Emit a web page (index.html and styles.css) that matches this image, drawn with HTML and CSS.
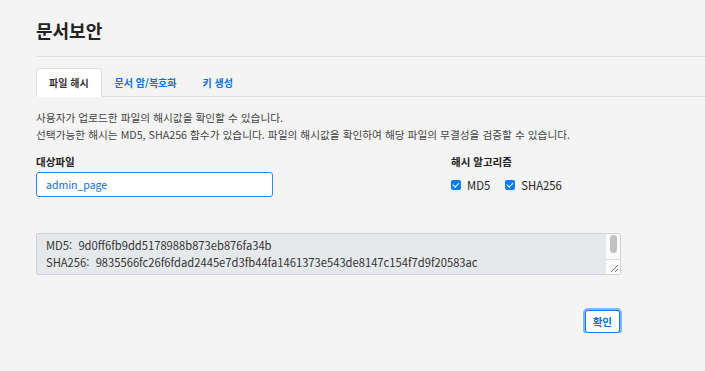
FILE: index.html
```html
<!DOCTYPE html>
<html lang="ko">
<head>
    <meta charset="UTF-8">
    <meta name="viewport" content="width=device-width, initial-scale=1.0">
    <title>문서보안</title>
    <link rel="stylesheet" href="styles.css">
</head>
<body>
    <div class="page">
        <div class="page-header">
            <h1>문서보안</h1>
        </div>

        <ul class="nav-tabs">
            <li class="tab-item"><a class="tab-link active" href="#">파일 해시</a></li>
            <li class="tab-item"><a class="tab-link" href="#">문서 암/복호화</a></li>
            <li class="tab-item"><a class="tab-link" href="#">키 생성</a></li>
        </ul>

        <form class="hash-form">
            <p class="desc">
                사용자가 업로드한 파일의 해시값을 확인할 수 있습니다.<br>
                선택가능한 해시는 MD5, SHA256 함수가 있습니다. 파일의 해시값을 확인하여 해당 파일의 무결성을 검증할 수 있습니다.
            </p>

            <div class="form-row">
                <div class="form-group">
                    <label class="form-label" for="targetFile">대상파일</label>
                    <div class="field">
                        <input type="text" id="targetFile" class="form-input" value="admin_page">
                    </div>
                </div>
                <div class="form-group">
                    <span class="form-label">해시 알고리즘</span>
                    <div class="field checks">
                        <label class="check"><input type="checkbox" checked> MD5</label>
                        <label class="check"><input type="checkbox" checked> SHA256</label>
                    </div>
                </div>
            </div>

            <div class="result-box">
                <textarea class="result" readonly>MD5:  9d0ff6fb9dd5178988b873eb876fa34b
SHA256:  9835566fc26f6fdad2445e7d3fb44fa1461373e543de8147c154f7d9f20583ac
</textarea>
                <!-- scrollbar + resize grip, drawn since headless hides native scrollbars -->
                <div class="scroll-bar">
                    <div class="scroll-thumb"></div>
                    <div class="resize-grip">
                        <svg width="9" height="9" viewBox="0 0 9 9">
                            <path d="M1 8 L8 1 M5 8 L8 5" stroke="#555" stroke-width="0.8" fill="none"/>
                        </svg>
                    </div>
                </div>
            </div>

            <div class="actions">
                <button type="submit" class="btn-confirm">확인</button>
            </div>
        </form>
    </div>
</body>
</html>
```

FILE: styles.css
```css
* {
    box-sizing: border-box;
}

body {
    margin: 0;
    background-color: #f4f4f4;
    color: #333;
    font-family: "Noto Sans CJK KR", "Noto Sans", sans-serif;
    font-size: 10px;
}

.page {
    padding: 18px 0 0 36px;
}

.page-header {
    padding-bottom: 14px;
    border-bottom: 1px solid #dcdfe3;
}

.page-header h1 {
    margin: 0;
    font-size: 18px;
    line-height: 24px;
    font-weight: 700;
    color: #222;
}

.nav-tabs {
    display: flex;
    list-style: none;
    margin: 11px 0 0;
    padding: 0;
    border-bottom: 1px solid #dcdfe3;
}

.tab-item {
    margin-bottom: -1px;
}

.tab-link {
    display: block;
    padding: 6px 12px;
    line-height: 15px;
    border: 1px solid transparent;
    border-radius: 3px 3px 0 0;
    color: #0a72e6;
    font-weight: 700;
    text-decoration: none;
}

.tab-link.active {
    background-color: #fff;
    border-color: #dcdfe3 #dcdfe3 #fff;
    color: #333;
}

.hash-form {
    width: 585px;
}

.desc {
    margin: 12px 0 0;
    font-size: 10.7px;
    line-height: 17px;
    color: #444;
}

.form-row {
    display: grid;
    grid-template-columns: 1fr 170px;
    margin-top: 10px;
}

.form-label {
    display: block;
    margin-bottom: 2px;
    font-size: 10.5px;
    line-height: 17px;
    font-weight: 700;
    color: #222;
}

.field {
    height: 25px;
}

.form-input {
    width: 237px;
    height: 25px;
    padding: 0 9px;
    border: 1px solid #2f86f0;
    border-radius: 3px;
    background-color: #fff;
    color: #0a6fe0;
    font-family: inherit;
    font-size: 10.5px;
    outline: none;
}

.checks {
    display: flex;
    align-items: center;
    gap: 15px;
}

.check {
    display: flex;
    align-items: center;
    gap: 6px;
    font-size: 11.3px;
    color: #222;
}

.check input {
    appearance: none;
    margin: 0;
    width: 10px;
    height: 10px;
    border-radius: 2px;
    background-color: #0a7cff;
    position: relative;
}

.check input:checked::after {
    content: '';
    position: absolute;
    left: 3px;
    top: 1.5px;
    width: 2.5px;
    height: 5px;
    border: solid #fff;
    border-width: 0 1.2px 1.2px 0;
    transform: rotate(45deg);
}

.result-box {
    position: relative;
    margin-top: 36px;
}

.result {
    display: block;
    width: 585px;
    height: 42px;
    padding: 3px 24px 3px 9px;
    border: 1px solid #cfd3d8;
    border-radius: 2px;
    background-color: #e6e9ec;
    color: #333;
    font-family: inherit;
    font-size: 11.2px;
    line-height: 17px;
    resize: none;
    overflow: hidden;
}

.scroll-bar {
    position: absolute;
    top: 1px;
    right: 1px;
    bottom: 1px;
    width: 15px;
    display: flex;
    flex-direction: column;
    background-color: #fafafa;
    border-left: 1px solid #e8e8e8;
}

.scroll-thumb {
    width: 7px;
    height: 18px;
    margin: 1px auto 0;
    border-radius: 4px;
    background-color: #c1c1c1;
}

.resize-grip {
    display: flex;
    align-items: flex-end;
    justify-content: flex-end;
    margin-top: auto;
    height: 15px;
    border-top: 1px solid #dcdcdc;
    background-color: #fcfcfc;
}

.resize-grip svg {
    display: block;
    margin: 0 1px 1px 0;
}

.actions {
    display: flex;
    justify-content: flex-end;
    margin-top: 35px;
}

.btn-confirm {
    padding: 3px 7px;
    margin-right: 1px;
    line-height: 15px;
    border: 1px solid #1877f2;
    border-radius: 3px;
    background-color: #fff;
    color: #0a6fe0;
    font-family: inherit;
    font-size: 10.5px;
    font-weight: 700;
    box-shadow: 0 0 0 2px rgba(52, 140, 250, 0.6);
    cursor: pointer;
}
```
